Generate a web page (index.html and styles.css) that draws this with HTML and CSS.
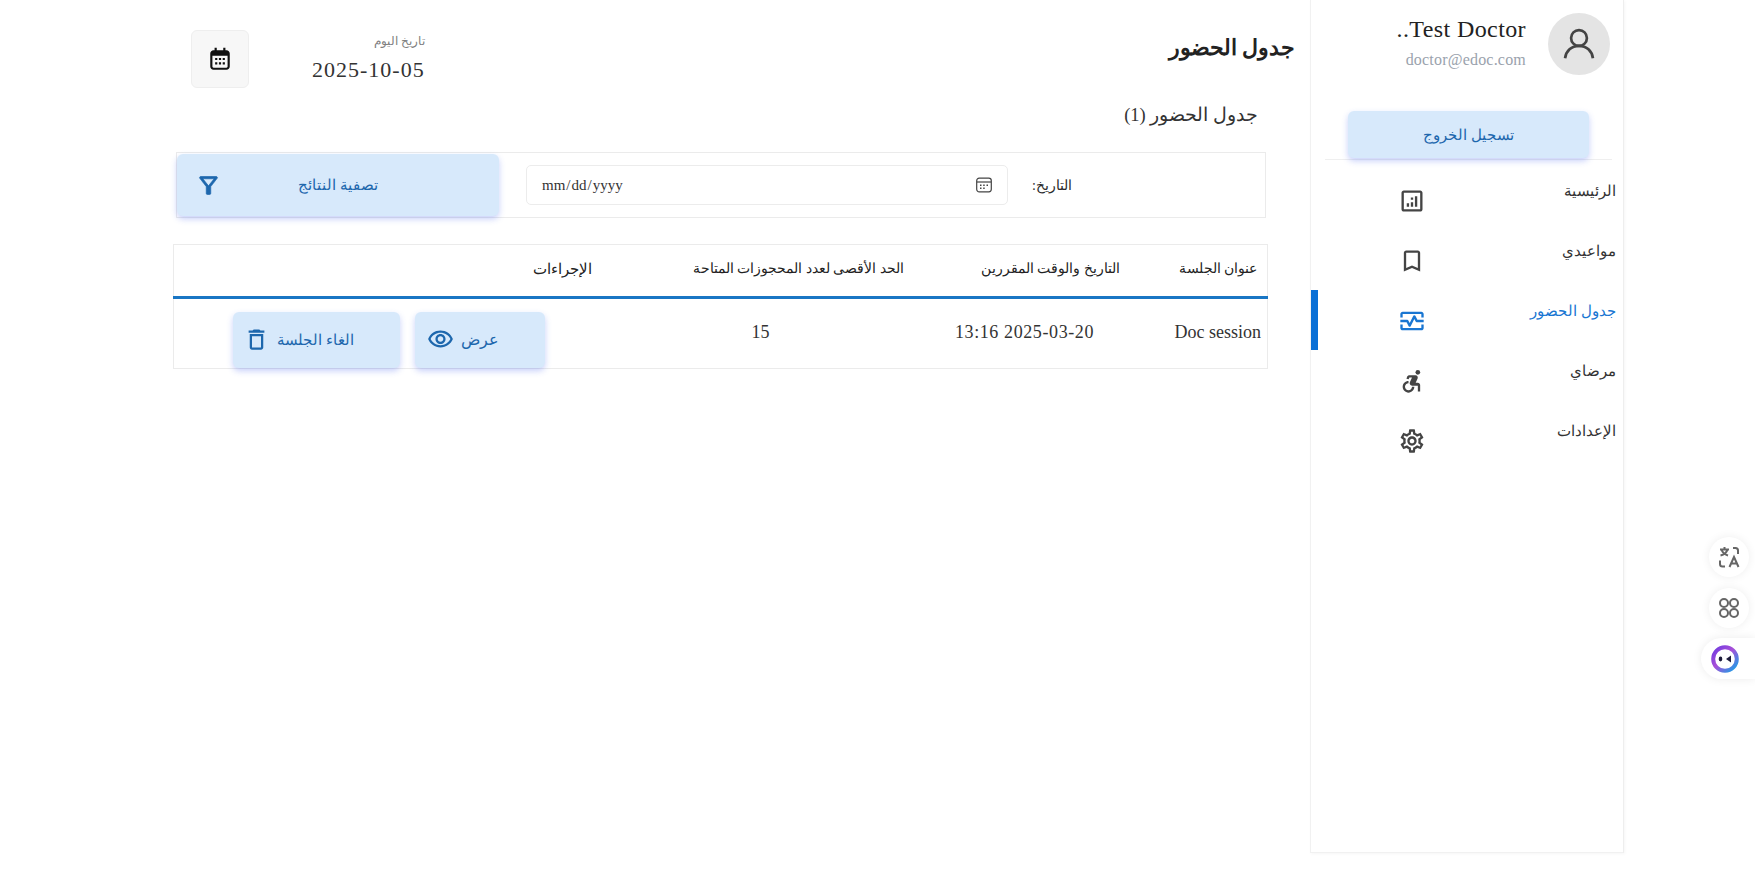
FILE: index.html
```html
<!DOCTYPE html>
<html lang="ar" dir="rtl">
<head>
<meta charset="utf-8">
<title>جدول الحضور</title>
<link rel="stylesheet" href="styles.css">
</head>
<body>
<div class="page">
  <aside class="sidebar">
    <div class="profile">
      <div class="avatar">
        <svg viewBox="0 0 24 24" class="avatar-icon"><circle cx="12" cy="8.200" r="5"/><path d="M3.200 21c.6-4.600 4-7.800 8.800-7.800s8.200 3.200 8.800 7.800"/></svg>
      </div>
      <div class="who">
        <div class="who-name" dir="ltr">..Test Doctor</div>
        <div class="who-mail" dir="ltr">doctor@edoc.com</div>
      </div>
    </div>
    <div class="logout-wrap"><button class="btn logout">تسجيل الخروج</button></div>
    <nav class="nav">
      <a class="nav-item">
        <span class="nav-text">الرئيسية</span>
        <svg class="nav-icon" viewBox="0 0 24 24"><path d="M19 3H5c-1.100 0-2 .9-2 2v14c0 1.100.9 2 2 2h14c1.100 0 2-.9 2-2V5c0-1.100-.9-2-2-2zm0 16H5V5h14v14z"/><path d="M7.500 14h2v3h-2zM11 9h2v2h-2zM11 13h2v4h-2zM14.500 8h2v9h-2z"/></svg>
      </a>
      <a class="nav-item">
        <span class="nav-text">مواعيدي</span>
        <svg class="nav-icon" viewBox="0 0 24 24"><path d="M17 3H7c-1.100 0-1.990.9-1.990 2L5 21l7-3 7 3V5c0-1.100-.9-2-2-2zm0 15l-5-2.180L7 18V5h10v13z"/></svg>
      </a>
      <a class="nav-item active">
        <span class="nav-text">جدول الحضور</span>
        <svg class="nav-icon" viewBox="0 0 24 24"><path d="M20 4H4c-1.100 0-2 .9-2 2v3h2V6h16v3h2V6c0-1.100-.9-2-2-2zM20 18H4v-3H2v3c0 1.100.9 2 2 2h16c1.100 0 2-.9 2-2v-3h-2v3z"/><path d="M14.890 7.550c-.34-.68-1.450-.68-1.790 0L10 13.760l-1.110-2.210C8.720 11.210 8.380 11 8 11H2v2h5.380l1.720 3.450c.18.34.52.55.9.55s.72-.21.89-.55L14 10.240l1.110 2.210c.17.34.51.55.89.55h6v-2h-5.380l-1.730-3.450z"/></svg>
      </a>
      <a class="nav-item">
        <span class="nav-text">مرضاي</span>
        <svg class="nav-icon" viewBox="0 0 24 24"><circle cx="17" cy="4.540" r="2"/><path d="M14 17h-2c0 1.650-1.350 3-3 3s-3-1.350-3-3 1.350-3 3-3v-2c-2.760 0-5 2.240-5 5s2.240 5 5 5 5-2.240 5-5zm3-3.500h-1.860l1.670-3.670C17.420 8.500 16.440 7 14.960 7h-5.200c-.81 0-1.540.47-1.870 1.200L7.220 10l1.920.53L9.790 9H12l-1.830 4.100c-.6 1.330.39 2.900 1.850 2.900H17v5h2v-5.500c0-1.100-.9-2-2-2z"/></svg>
      </a>
      <a class="nav-item">
        <span class="nav-text">الإعدادات</span>
        <svg class="nav-icon" viewBox="0 0 24 24"><path d="M19.430 12.980c.04-.32.07-.64.07-.98 0-.34-.03-.66-.07-.98l2.110-1.650c.19-.15.24-.42.12-.64l-2-3.460c-.09-.16-.26-.25-.44-.25-.06 0-.12.01-.17.03l-2.490 1c-.52-.4-1.080-.73-1.690-.98l-.38-2.650C14.460 2.180 14.250 2 14 2h-4c-.25 0-.46.18-.49.42l-.38 2.650c-.61.25-1.170.59-1.690.98l-2.490-1c-.06-.02-.12-.03-.18-.03-.17 0-.34.09-.43.25l-2 3.460c-.13.22-.07.49.12.64l2.110 1.650c-.04.32-.07.65-.07.98 0 .33.03.66.07.98l-2.110 1.650c-.19.15-.24.42-.12.64l2 3.460c.09.16.26.25.44.25.06 0 .12-.01.17-.03l2.490-1c.52.4 1.080.73 1.690.98l.38 2.650c.03.24.24.42.49.42h4c.25 0 .46-.18.49-.42l.38-2.650c.61-.25 1.170-.59 1.690-.98l2.490 1c.06.02.12.03.18.03.17 0 .34-.09.43-.25l2-3.460c.12-.22.07-.49-.12-.64l-2.110-1.650zm-1.980-1.710c.04.31.05.52.05.73 0 .21-.02.43-.05.73l-.14 1.130.89.7 1.080.84-.7 1.210-1.270-.51-1.040-.42-.9.68c-.43.32-.84.56-1.250.73l-1.060.43-.16 1.130-.2 1.350h-1.400l-.19-1.350-.16-1.130-1.060-.43c-.43-.18-.83-.41-1.230-.71l-.91-.7-1.060.43-1.270.51-.7-1.210 1.080-.84.89-.7-.14-1.130c-.03-.31-.05-.54-.05-.74s.02-.43.05-.73l.14-1.130-.89-.7-1.080-.84.7-1.210 1.270.51 1.040.42.9-.68c.43-.32.84-.56 1.250-.73l1.060-.43.16-1.130.2-1.350h1.390l.19 1.350.16 1.130 1.060.43c.43.18.83.41 1.230.71l.91.7 1.060-.43 1.270-.51.7 1.210-1.070.85-.89.7.14 1.130zM12 8c-2.210 0-4 1.790-4 4s1.790 4 4 4 4-1.790 4-4-1.790-4-4-4zm0 6c-1.100 0-2-.9-2-2s.9-2 2-2 2 .9 2 2-.9 2-2 2z"/></svg>
      </a>
    </nav>
  </aside>

  <main class="main">
    <header class="topbar">
      <h1 class="title">جدول الحضور</h1>
      <div class="today">
        <div class="today-text">
          <div class="today-label">تاريخ اليوم</div>
          <div class="today-date">2025-10-05</div>
        </div>
        <div class="cal-box">
          <svg viewBox="0 0 24 24" class="cal-icon"><path d="M7 1.500h2V4h6V1.500h2V4h1c1.650 0 3 1.350 3 3v12c0 1.650-1.350 3-3 3H6c-1.650 0-3-1.350-3-3V7c0-1.650 1.350-3 3-3h1zM5 9v10c0 .55.45 1 1 1h12c.55 0 1-.45 1-1V9z"/><path d="M7.500 11h2v2h-2zM11 11h2v2h-2zM14.500 11h2v2h-2zM7.500 15h2v2h-2zM11 15h2v2h-2zM14.500 15h2v2h-2z"/></svg>
        </div>
      </div>
    </header>

    <h2 class="count">جدول الحضور (1)</h2>

    <section class="filter">
      <label class="filter-label" for="d">التاريخ:</label>
      <div class="date-wrap">
        <input id="d" class="date-input" type="date" dir="ltr">
        <svg viewBox="0 0 16 16" class="date-icon"><rect x=".7" y="1.200" width="14.600" height="13.600" rx="2.500"/><path d="M1 5h14"/><path class="date-dots" d="M4 7.500h1.500V9H4zM7.200 7.500h1.500V9H7.200zM10.500 7.500H12V9h-1.500zM4 10.500h1.500V12H4zM7.200 10.500h1.500V12H7.200z"/></svg>
      </div>
      <button class="btn filter-btn">
        <span class="filter-text">تصفية النتائج</span>
        <svg viewBox="0 0 24 24" class="filter-icon"><path d="M7 6h10l-5.010 6.300L7 6zm-2.750-.39C6.270 8.200 10 13 10 13v6c0 .55.45 1 1 1h2c.55 0 1-.45 1-1v-6s3.720-4.800 5.740-7.390c.51-.66.04-1.610-.79-1.610H5.040c-.83 0-1.300.95-.79 1.610z"/></svg>
      </button>
    </section>

    <table class="table">
      <thead>
        <tr>
          <th class="c1">عنوان الجلسة</th>
          <th class="c2">التاريخ والوقت المقررين</th>
          <th class="c3">الحد الأقصى لعدد المحجوزات المتاحة</th>
          <th class="c4">الإجراءات</th>
        </tr>
      </thead>
      <tbody>
        <tr>
          <td class="c1 td-title">Doc session</td>
          <td class="c2 td-center td-date">2025-03-20 13:16</td>
          <td class="c3 td-center td-num">15</td>
          <td class="c4 td-actions">
            <div class="actions">
              <button class="btn act act-view">
                <span>عرض</span>
                <svg viewBox="0 0 24 24" class="act-icon"><path d="M12 6c3.790 0 7.170 2.130 8.820 5.500C19.170 14.870 15.790 17 12 17s-7.170-2.130-8.820-5.500C4.830 8.130 8.210 6 12 6m0-2C7 4 2.730 7.110 1 11.500 2.730 15.890 7 19 12 19s9.270-3.110 11-7.500C21.270 7.110 17 4 12 4zm0 5c1.380 0 2.500 1.120 2.500 2.500S13.380 14 12 14s-2.500-1.120-2.500-2.500S10.620 9 12 9m0-2c-2.480 0-4.500 2.020-4.500 4.500S9.520 16 12 16s4.500-2.020 4.500-4.500S14.480 7 12 7z"/></svg>
              </button>
              <button class="btn act act-cancel">
                <span>الغاء الجلسة</span>
                <svg viewBox="0 0 24 24" class="act-icon"><path d="M6 19c0 1.100.9 2 2 2h8c1.100 0 2-.9 2-2V7H6v12zM8 9h8v10H8V9zm7.500-5l-1-1h-5l-1 1H5v2h14V4z"/></svg>
              </button>
            </div>
          </td>
        </tr>
      </tbody>
    </table>
  </main>
</div>

<div class="floats">
  <div class="float-btn">
    <svg viewBox="0 0 24 24" class="float-icon"><path d="M3 4.500h9M7.500 2v2.500M10.500 4.500c-.8 3-3 5-7 6M4.500 4.500c.8 2.800 2.800 4.800 6.500 6"/><path d="M16 3h2.500C20 3 21 4 21 5.500V9M8 21.500H5.500C4 21.500 3 20.500 3 19v-3.500"/><path d="M12.500 22l4.500-10 4.500 10M14 18.500h6"/></svg>
  </div>
  <div class="float-btn">
    <svg viewBox="0 0 24 24" class="float-icon"><rect x="3" y="3" width="8" height="8" rx="4"/><rect x="13" y="3" width="8" height="8" rx="4"/><rect x="3" y="13" width="8" height="8" rx="4"/><rect x="13" y="13" width="8" height="8" rx="4"/></svg>
  </div>
  <div class="float-pill">
    <svg viewBox="0 0 28 28" class="pill-logo">
      <defs><linearGradient id="ring" x1="0" y1="0" x2="1" y2="1"><stop offset="0" stop-color="#6d3be0"/><stop offset=".45" stop-color="#a94fd8"/><stop offset="1" stop-color="#12a5e8"/></linearGradient></defs>
      <circle cx="14" cy="14" r="11.800" fill="#fff" stroke="url(#ring)" stroke-width="4"/>
      <ellipse cx="9.500" cy="14" rx="1.800" ry="2.400" fill="#1d1b3a"/>
      <path d="M20 10.500 15 14l5 3.500z" fill="#1d1b3a"/>
    </svg>
  </div>
</div>
</body>
</html>
```
FILE: styles.css
```css
* { box-sizing: border-box; }
html, body { margin: 0; height: 100%; overflow: hidden; background: #fff; }
body {
  font-family: "Liberation Serif", "Noto Sans", serif;
  color: #2b2b2b;
}
.page {
  display: flex;
  align-items: stretch;
  height: 853px;
  padding-right: 131px;
}
.sidebar {
  width: 314px;
  flex: none;
  border-left: 1px solid #f1f1f1;
  border-right: 1px solid #eeeeee;
  border-bottom: 1px solid #f1f1f1;
  box-shadow: 1px 1px 3px rgba(0, 0, 0, .04);
}
.profile { display: flex; align-items: flex-start; padding: 13px 13px 0 0; gap: 22px; }
.avatar {
  width: 62px; height: 62px; border-radius: 50%; background: #e4e4e4;
  display: flex; align-items: center; justify-content: center;
}
.avatar-icon { width: 38px; height: 38px; fill: none; stroke: #444; stroke-width: 1.700; }
.who { padding-top: 1px; text-align: right; }
.who-name { font-size: 24px; line-height: 30px; color: #222; text-align: right; letter-spacing: .4px; }
.who-mail { font-size: 16px; line-height: 20px; margin-top: 6px; color: #9aa2ad; text-align: right; letter-spacing: .2px; }
.logout-wrap { margin: 36px 11px 0 14px; padding: 0 23px 1px 23px; border-bottom: 1px solid #efefef; }
.btn {
  font-family: inherit; border: 0; border-radius: 6px; background: #d7e9fb; color: #1d67ad;
  box-shadow: 0 3px 6px rgba(70, 100, 240, .3);
  cursor: pointer;
}
.logout { display: block; width: 100%; height: 47px; font-size: 15px; }
.nav { padding-top: 14px; }
.nav-item {
  display: block; height: 60px; position: relative; font-size: 14.500px; color: #333;
}
.nav-text { position: absolute; right: 7px; top: 5px; line-height: 24px; }
.nav-icon { position: absolute; left: 87px; top: 13px; width: 28px; height: 28px; fill: #444; }
.nav-item.active { color: #1976d2; }
.nav-item.active .nav-icon { fill: #1976d2; }
.nav-item.active::before {
  content: ""; position: absolute; left: 0; top: -4px; width: 7px; height: 60px; background: #0a70d6;
}

.main { flex: 1; min-width: 0; padding-left: 42px; padding-right: 16px; }
.topbar { display: flex; justify-content: space-between; align-items: flex-start; padding-top: 30px; }
.title { margin: 0 -1px 0 0; font-size: 22px; font-weight: 700; line-height: 36px; color: #222; }
.today { display: flex; align-items: flex-start; gap: 63px; padding-left: 149px; }
.today-text { text-align: right; padding-top: 1px; }
.today-label { font-size: 12px; line-height: 20px; color: #808080; }
.today-date { font-size: 22px; line-height: 28px; color: #333; letter-spacing: 1px; margin-top: 5px; }
.cal-box {
  width: 58px; height: 58px; border: 1px solid #eee; border-radius: 6px; background: #f7f7f7;
  display: flex; align-items: center; justify-content: center;
}
.cal-icon { width: 26px; height: 26px; fill: #111; }
.count { margin: 13px 36px 0 0; font-size: 18.500px; font-weight: 400; line-height: 28px; color: #333; }

.filter {
  display: flex; align-items: center; height: 66px; margin: 23px 28px 0 0;
  border: 1px solid #ebebeb; width: 1090px;
}
.filter-label { width: 257px; padding-right: 193px; flex: none; font-size: 14px; }
.date-wrap { position: relative; flex: none; width: 482px; height: 40px; margin-left: 27px; }
.date-input {
  width: 100%; height: 100%; border: 1px solid #ececec; border-radius: 5px; padding: 0 14px;
  font-family: "Liberation Serif", serif; font-size: 15px; color: #333; background: #fff;
}
.date-input::-webkit-calendar-picker-indicator { opacity: 0; }
.date-icon {
  position: absolute; left: 450px; top: 12px; width: 16px; height: 16px;
  fill: none; stroke: #444; stroke-width: 1.200; pointer-events: none;
}
.date-dots { fill: #444; stroke: none; }
.filter-btn {
  flex: none; width: 322px; height: 62px; display: flex; align-items: center;
  justify-content: space-between; padding: 0; font-size: 14.500px;
}
.filter-text { margin-right: 121px; }
.filter-icon { width: 27px; height: 27px; fill: #1d67ad; stroke: #1d67ad; stroke-width: .6; margin-left: 18px; }

.table {
  width: 1094px; margin: 26px 26px 0 0; border-collapse: collapse; border: 1px solid #ebebeb; table-layout: fixed;
}
.table th { font-size: 14px; font-weight: 400; text-align: right; height: 53px; padding: 0 6px 4px 6px; border-bottom: 3px solid #1976c4; color: #222; }
.table th.c1 { padding-right: 10px; }
.table th.c3 { padding-right: 14px; }
.table th.c4 { font-size: 15px; padding-right: 8px; }
.table td { font-size: 18px; height: 71px; padding: 0 6px 3px; color: #333; }
.table td.td-actions { padding-bottom: 0; }
.c1 { width: 142px; }
.c2 { width: 208px; }
.c3 { width: 318px; }
.c4 { width: 426px; }
.td-title { text-align: right; }
.td-center { text-align: center; }
.table td.td-date { padding-left: 12px; letter-spacing: .6px; }
.table td.td-num { padding-left: 10px; }
.actions { display: flex; gap: 15px; padding: 12px 49px 0 0; }
.act { display: flex; align-items: center; justify-content: flex-start; height: 56px; gap: 7px; padding: 0 46px 0 0; }
.act-view { width: 130px; font-size: 16px; }
.act-cancel { width: 167px; font-size: 15px; }
.act-icon { width: 27px; height: 27px; fill: #1d67ad; }

.floats { position: absolute; top: 537px; right: 0; display: flex; flex-direction: column; align-items: flex-start; gap: 11px; }
.float-btn {
  width: 40px; height: 40px; border-radius: 50%; background: #fff; margin-right: 6px;
  display: flex; align-items: center; justify-content: center;
  box-shadow: 0 0 10px rgba(0, 0, 0, .07);
}
.float-icon { width: 24px; height: 24px; fill: none; stroke: #666; stroke-width: 2; }
.float-pill {
  width: 54px; height: 41px; margin-top: -1px; border-radius: 21px 0 0 21px; background: #fff;
  display: flex; align-items: center; padding-left: 10px; justify-content: flex-end;
  box-shadow: 0 0 10px rgba(0, 0, 0, .08);
}
.pill-logo { width: 28px; height: 28px; }
```
